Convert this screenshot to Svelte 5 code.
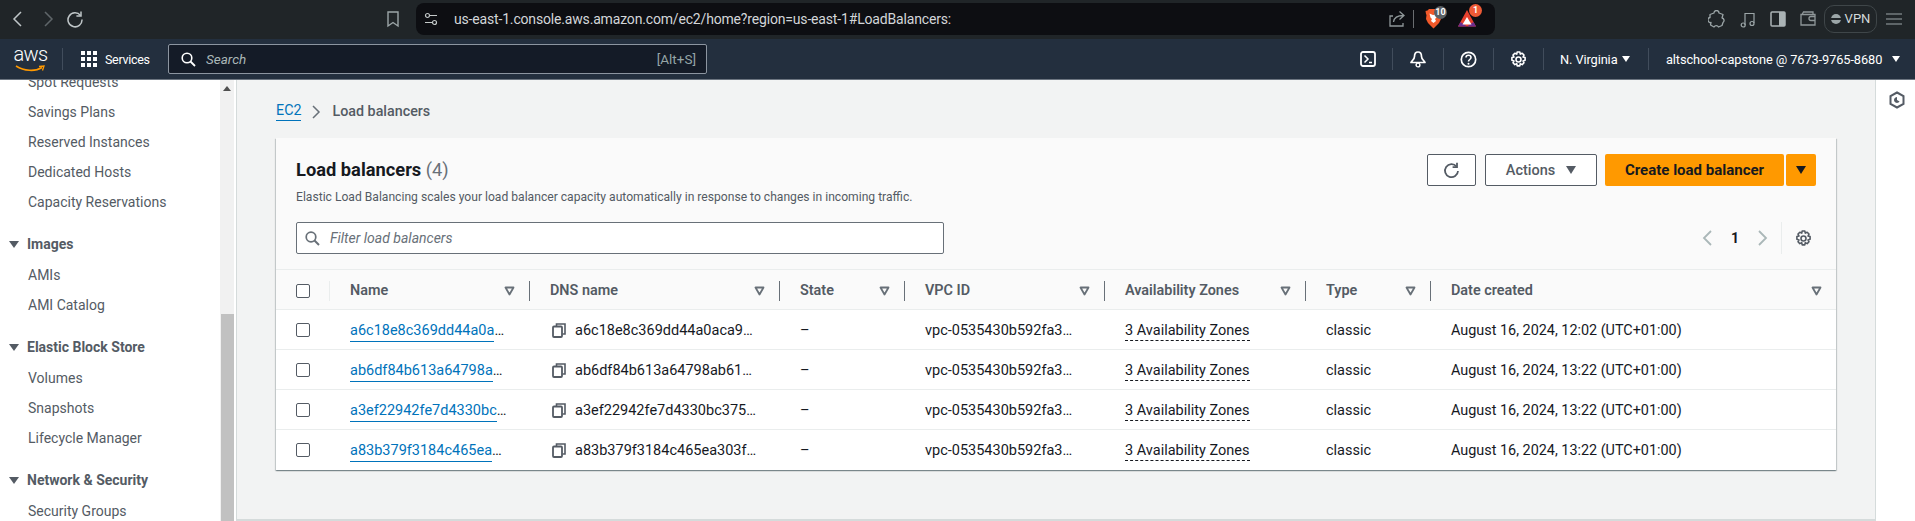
<script>
	const sideTop = ['Spot Requests', 'Savings Plans', 'Reserved Instances', 'Dedicated Hosts', 'Capacity Reservations'];
	const sideGroups = [
		{ title: 'Images', items: ['AMIs', 'AMI Catalog'] },
		{ title: 'Elastic Block Store', items: ['Volumes', 'Snapshots', 'Lifecycle Manager'] },
		{ title: 'Network & Security', items: ['Security Groups'] }
	];
	const columns = [
		{ label: 'Name', w: 200 },
		{ label: 'DNS name', w: 250 },
		{ label: 'State', w: 125 },
		{ label: 'VPC ID', w: 200 },
		{ label: 'Availability Zones', w: 201 },
		{ label: 'Type', w: 125 },
		{ label: 'Date created', w: 406 }
	];
	const rows = [
		{ name: 'a6c18e8c369dd44a0a', dns: 'a6c18e8c369dd44a0aca9', date: 'August 16, 2024, 12:02 (UTC+01:00)' },
		{ name: 'ab6df84b613a64798a', dns: 'ab6df84b613a64798ab61', date: 'August 16, 2024, 13:22 (UTC+01:00)' },
		{ name: 'a3ef22942fe7d4330bc', dns: 'a3ef22942fe7d4330bc375', date: 'August 16, 2024, 13:22 (UTC+01:00)' },
		{ name: 'a83b379f3184c465ea', dns: 'a83b379f3184c465ea303f', date: 'August 16, 2024, 13:22 (UTC+01:00)' }
	];
	const gear = 'M7.2 1h2.600l.5 2.100 1.900-.8 1.800 1.800-1 1.900 2.100.6v2.700l-2.100.6 1 1.900-1.800 1.800-1.900-1-.5 2.300H7.200l-.5-2.300-1.900 1L3 11.800l1-1.900-2.100-.6V6.600L4 6 3 4.100l1.800-1.800 1.900.8z';
</script>

<div class="page">
	<!-- browser toolbar -->
	<header class="chrome">
		<svg class="c-back" width="12" height="18" viewBox="0 0 12 18"><path d="M9 2 2 9l7 7" fill="none" stroke="#bfc6c8" stroke-width="1.500"/></svg>
		<svg class="c-fwd" width="12" height="18" viewBox="0 0 12 18"><path d="M3 2l7 7-7 7" fill="none" stroke="#5f6669" stroke-width="1.500"/></svg>
		<svg class="c-reload" width="18" height="18" viewBox="0 0 18 18"><path d="M14.500 5.500A7 7 0 1 0 16 9.500" fill="none" stroke="#bfc6c8" stroke-width="1.500"/><path d="M15 1.500v4.600h-4.600" fill="none" stroke="#bfc6c8" stroke-width="1.500"/></svg>
		<svg class="c-mark" width="14" height="18" viewBox="0 0 14 18"><path d="M2 2h10v14l-5-3.500L2 16z" fill="none" stroke="#9ca6a8" stroke-width="1.400"/></svg>
		<div class="address">
			<svg width="14" height="14" viewBox="0 0 14 14"><circle cx="3.500" cy="3.500" r="2" fill="none" stroke="#c4c9c9" stroke-width="1.200"/><path d="M6 3.500h7M1 10.500h7" stroke="#c4c9c9" stroke-width="1.200"/><circle cx="10.500" cy="10.500" r="2" fill="none" stroke="#c4c9c9" stroke-width="1.200"/></svg>
			<span class="url">us-east-1.console.aws.amazon.com/ec2/home?region=us-east-1#LoadBalancers:</span>
			<svg class="share" width="18" height="18" viewBox="0 0 18 18"><path d="M5 6H2v10h13v-3M5.500 12c.5-4 3.500-6.500 10-6.500M11.500 1.500l4.500 4-4.500 4" fill="none" stroke="#8f9799" stroke-width="1.300"/></svg>
			<i class="addr-sep"></i>
			<span class="ext">
				<svg width="17" height="21" viewBox="0 0 17 21"><path d="M4 1h9l1.500 1.500 2 .5-.5 3-.5 1 .5 4-2 4-5.500 5.500L3 15l-2-4 .5-4L1 6 .5 3l2-.5z" fill="#f1592a"/><path d="M4.500 5.500 8 7l.5 0 3.500-1.500-.5 4-1.500 1.500 1 2-2.500 2-2.500-2 1-2-1.500-1.500z" fill="#fff"/></svg>
				<b class="badge gray">10</b>
			</span>
			<span class="ext bat">
				<svg width="18" height="17" viewBox="0 0 18 17"><path d="M9 0 18 16.500H0z" fill="#e8412e"/><path d="M0 16.500 2.500 12 9 16.500l6.500-4.500L18 16.500z" fill="#6d2c8e"/><path d="M9 7l4.500 7.500h-9z" fill="#fff"/></svg>
				<b class="badge red">1</b>
			</span>
		</div>
		<svg class="c-puzzle" width="17" height="18" viewBox="0 0 17 18"><path d="M6 3a2.500 2.500 0 0 1 5 0l4 1.500-1 3.500a2.500 2.500 0 0 1 1 4.500l-1 3-3.500 1.500a2.500 2.500 0 0 0-4.500 0L2.500 15l.5-2.500a2.500 2.500 0 0 1-1-5L2 4.500z" fill="none" stroke="#9ca6a8" stroke-width="1.300" stroke-linejoin="round"/></svg>
		<svg class="c-music" width="16" height="18" viewBox="0 0 16 18"><path d="M5 15V3.500h9V13" fill="none" stroke="#9ca6a8" stroke-width="1.200"/><circle cx="3.200" cy="15" r="2" fill="none" stroke="#9ca6a8" stroke-width="1.200"/><circle cx="12" cy="13.500" r="2" fill="none" stroke="#9ca6a8" stroke-width="1.200"/></svg>
		<svg class="c-side" width="16" height="16" viewBox="0 0 16 16"><rect x="1" y="1" width="14" height="14" rx="1" fill="none" stroke="#aab3b5" stroke-width="1.500"/><rect x="9" y="1" width="6" height="14" fill="#aab3b5"/></svg>
		<svg class="c-wallet" width="16" height="15" viewBox="0 0 16 15"><path d="M2 3.500 3.500 1H13v2.500M1 3.500h14V14H1zM15 5.500h-4a2 2 0 0 0 0 4h4" fill="none" stroke="#8f9799" stroke-width="1.300"/></svg>
		<div class="vpn"><i class="vpn-dot"></i>VPN</div>
		<svg class="c-menu" width="16" height="14" viewBox="0 0 16 14"><path d="M0 2h16M0 7h16M0 12h16" stroke="#9ca6a8" stroke-width="1.200"/></svg>
	</header>

	<!-- aws console nav -->
	<nav class="topnav">
		<div class="logo">
			<span>aws</span>
			<svg width="31" height="8" viewBox="0 0 31 8"><path d="M1 1C9 6 20 7 27 2.500" fill="none" stroke="#ff9900" stroke-width="1.600"/><path d="M24 1.500 29 1l-1.500 4.500" fill="none" stroke="#ff9900" stroke-width="1.300"/></svg>
		</div>
		<i class="nav-sep first"></i>
		<svg class="grid-ico" width="16" height="16" viewBox="0 0 16 16" fill="#fff">
			{#each [0, 6, 12] as y}{#each [0, 6, 12] as x}<rect {x} {y} width="4" height="4"/>{/each}{/each}
		</svg>
		<span class="services">Services</span>
		<div class="search">
			<svg width="15" height="15" viewBox="0 0 15 15"><circle cx="6" cy="6" r="4.800" fill="none" stroke="#fff" stroke-width="1.600"/><path d="M9.500 9.500 14 14" stroke="#fff" stroke-width="1.800"/></svg>
			<em>Search</em>
			<span class="hint">[Alt+S]</span>
		</div>
		<svg class="n-shell" width="16" height="16" viewBox="0 0 16 16"><rect x="1" y="1" width="14" height="14" rx="2" fill="none" stroke="#fff" stroke-width="1.800"/><path d="M4.500 4.500 8 8l-3.500 3.500M9 11.500h3" fill="none" stroke="#fff" stroke-width="1.500"/></svg>
		<i class="nav-sep"></i>
		<svg class="n-icon" width="18" height="18" viewBox="0 0 18 18"><path d="M9 2c2.500 0 3.500 2 3.500 4.500 0 2.500 2 3.500 3.500 6H2c1.500-2.500 3.500-3.500 3.500-6C5.500 4 6.500 2 9 2z" fill="none" stroke="#fff" stroke-width="1.700" stroke-linejoin="round"/><circle cx="9" cy="15" r="1.900" fill="none" stroke="#fff" stroke-width="1.400"/></svg>
		<i class="nav-sep"></i>
		<svg class="n-icon" width="17" height="17" viewBox="0 0 17 17"><circle cx="8.500" cy="8.500" r="7.200" fill="none" stroke="#fff" stroke-width="1.700"/><path d="M6 6.500c0-3 5-3 5 0 0 2-2.500 2-2.500 4" fill="none" stroke="#fff" stroke-width="1.600"/><circle cx="8.500" cy="12.700" r="1" fill="#fff"/></svg>
		<i class="nav-sep"></i>
		<svg class="n-icon" width="17" height="17" viewBox="0 0 17 17"><circle cx="8.500" cy="8.500" r="2.500" fill="none" stroke="#fff" stroke-width="1.600"/><path d={gear} fill="none" stroke="#fff" stroke-width="1.600" stroke-linejoin="round"/></svg>
		<i class="nav-sep"></i>
		<span class="region">N. Virginia</span><i class="caret white"></i>
		<i class="nav-sep acct-sep"></i>
		<span class="account">altschool-capstone @ 7673-9765-8680</span><i class="caret white acct-caret"></i>
	</nav>

	<div class="body">
		<aside class="sidebar">
			<div class="sidelist">
				{#each sideTop as item}
					<a class="side-item" href="#x">{item}</a>
				{/each}
				{#each sideGroups as g}
					<div class="side-head"><i class="caret grey"></i>{g.title}</div>
					{#each g.items as item}
						<a class="side-item" href="#x">{item}</a>
					{/each}
				{/each}
			</div>
		</aside>
		<div class="scrollbar">
			<i class="arrow"></i>
			<i class="thumb"></i>
		</div>

		<main class="content">
			<div class="crumbs">
				<a href="#x">EC2</a>
				<svg width="10" height="16" viewBox="0 0 10 16"><path d="M2 2l6 6-6 6" fill="none" stroke="#687078" stroke-width="1.500"/></svg>
				<span>Load balancers</span>
			</div>

			<section class="card">
				<div class="card-head">
					<div class="title-row">
						<div>
							<h1>Load balancers <span>(4)</span></h1>
							<p>Elastic Load Balancing scales your load balancer capacity automatically in response to changes in incoming traffic.</p>
						</div>
						<div class="actions">
							<button class="btn icon" aria-label="Refresh">
								<svg width="17" height="17" viewBox="0 0 17 17"><path d="M13.500 4.500A6.500 6.500 0 1 0 15 9" fill="none" stroke="#545b64" stroke-width="1.800"/><path d="M14 .8v4.400H9.600" fill="none" stroke="#545b64" stroke-width="1.800"/></svg>
							</button>
							<button class="btn act">Actions<i class="caret grey big"></i></button>
							<button class="btn primary">Create load balancer</button>
							<button class="btn primary drop" aria-label="More"><i class="caret dark big"></i></button>
						</div>
					</div>
					<div class="filter-row">
						<div class="filter">
							<svg width="15" height="15" viewBox="0 0 15 15"><circle cx="6" cy="6" r="4.800" fill="none" stroke="#687078" stroke-width="1.700"/><path d="M9.500 9.500 14 14" stroke="#687078" stroke-width="1.900"/></svg>
							<em>Filter load balancers</em>
						</div>
						<div class="pager">
							<svg width="12" height="18" viewBox="0 0 12 18"><path d="M10 2 3 9l7 7" fill="none" stroke="#aab7b8" stroke-width="1.800"/></svg>
							<b>1</b>
							<svg width="12" height="18" viewBox="0 0 12 18"><path d="M2 2l7 7-7 7" fill="none" stroke="#aab7b8" stroke-width="1.800"/></svg>
							<i class="pager-sep"></i>
							<svg width="17" height="17" viewBox="0 0 17 17"><circle cx="8.500" cy="8.500" r="2.500" fill="none" stroke="#545b64" stroke-width="1.600"/><path d={gear} fill="none" stroke="#545b64" stroke-width="1.600" stroke-linejoin="round"/></svg>
						</div>
					</div>
				</div>

				<table>
					<colgroup>
						<col style="width: 53px" />
						{#each columns as c}<col style="width: {c.w}px" />{/each}
					</colgroup>
					<thead>
						<tr>
							<th class="check"><i class="box"></i></th>
							{#each columns as c, i}
								<th class:last={i === columns.length - 1}>
									<div class="th">
										<span>{c.label}</span>
										<svg width="11" height="10" viewBox="0 0 11 10"><path d="M1.500 1.500h8L5.500 8.500z" fill="none" stroke="#687078" stroke-width="1.800" stroke-linejoin="round"/></svg>
									</div>
								</th>
							{/each}
						</tr>
					</thead>
					<tbody>
						{#each rows as r}
							<tr>
								<td class="check"><i class="box"></i></td>
								<td><a class="lb" href="#x">{r.name}</a>…</td>
								<td>
									<span class="dns">
										<svg width="14" height="15" viewBox="0 0 14 15"><path d="M4.500 3V1h8.500v10h-2.500" fill="none" stroke="#545b64" stroke-width="1.600"/><rect x="1" y="3.500" width="9" height="10.500" rx="1" fill="none" stroke="#545b64" stroke-width="1.800"/></svg>
										{r.dns}…
									</span>
								</td>
								<td>–</td>
								<td>vpc-0535430b592fa3…</td>
								<td><span class="az">3 Availability Zones</span></td>
								<td>classic</td>
								<td class="date">{r.date}</td>
							</tr>
						{/each}
					</tbody>
				</table>
			</section>
		</main>

		<aside class="rail">
			<svg width="16" height="18" viewBox="0 0 16 18"><path d="M8 1.500 14.500 5v8L8 16.500 1.500 13V5z" fill="none" stroke="#545b64" stroke-width="2"/><path d="M8 6a3 3 0 1 0 2.600 4.500L8 9z" fill="#545b64"/></svg>
		</aside>
	</div>
</div>

<style>
	:global(body) {
		margin: 0;
		overflow: hidden;
		background: #fff;
	}

	* {
		box-sizing: border-box;
	}

	.page {
		width: 1915px;
		height: 521px;
		display: flex;
		flex-direction: column;
		overflow: hidden;
		font-family: Roboto, "Liberation Sans", sans-serif;
		font-size: 14px;
		color: #16191f;
	}

	i {
		display: block;
		font-style: normal;
	}

	/* browser bar */
	.chrome {
		height: 39px;
		flex: none;
		display: flex;
		align-items: center;
		background: #202528;
		padding: 0 0 2px 12px;
	}

	.chrome > *, .topnav > * {
		flex: none;
	}

	.c-fwd { margin-left: 18px; }
	.c-reload { margin-left: 12px; }
	.c-mark { margin-left: 302px; }

	.address {
		width: 1079px;
		height: 32px;
		margin-left: 16px;
		display: flex;
		align-items: center;
		padding-left: 8px;
		background: #0d0e12;
		border-radius: 8px;
	}

	.url {
		margin-left: 16px;
		width: 820px;
		color: #d3d6d9;
		font-size: 14px;
		letter-spacing: -0.17px;
		white-space: nowrap;
	}

	.share { margin-left: 114px; }

	.addr-sep {
		width: 1px;
		height: 18px;
		margin: 0 11px 0 7px;
		background: #6a6d70;
	}

	.ext {
		position: relative;
		display: flex;
	}

	.ext.bat { margin-left: 16px; }

	.badge {
		position: absolute;
		top: -2px;
		left: 9px;
		min-width: 13px;
		height: 13px;
		padding: 0 1px;
		border-radius: 7px;
		color: #fff;
		font-size: 9px;
		line-height: 13px;
		text-align: center;
	}

	.badge.gray { background: #5b6064; }
	.badge.red { background: #ee5a36; left: 11px; top: -6px; }

	.c-puzzle { margin-left: 213px; }
	.c-music { margin-left: 15px; }
	.c-side { margin-left: 14px; }
	.c-wallet { margin-left: 14px; }

	.vpn {
		width: 53px;
		height: 28px;
		margin-left: 8px;
		display: flex;
		align-items: center;
		justify-content: center;
		gap: 4px;
		border: 1px solid #3f4649;
		border-radius: 10px;
		color: #d3d9da;
		font-size: 13px;
	}

	.vpn-dot {
		width: 10px;
		height: 10px;
		border-radius: 50%;
		background: linear-gradient(#9ca6a8 4px, #202528 4px, #202528 6px, #9ca6a8 6px);
	}

	.c-menu { margin-left: 9px; }

	/* console nav */
	.topnav {
		height: 41px;
		flex: none;
		display: flex;
		align-items: center;
		background: #232f3e;
		border-bottom: 1px solid #6c7580;
		color: #fff;
	}

	.logo {
		width: 31px;
		margin-left: 15px;
		height: 28px;
		display: flex;
		flex-direction: column;
		align-items: center;
	}

	.logo span {
		font-size: 20px;
		font-weight: 300;
		line-height: 19px;
		letter-spacing: -0.6px;
	}

	.logo svg { margin-top: 1px; }

	.nav-sep {
		width: 1px;
		height: 22px;
		background: #414d5c;
		margin: 0 16px;
	}

	.nav-sep.first { margin: 0 18px 0 16px; }
	.nav-sep.acct-sep { margin: 0 17px 0 18px; }

	.services {
		width: 45px;
		margin-left: 8px;
		font-size: 12.500px;
		letter-spacing: -0.3px;
		white-space: nowrap;
	}

	.search {
		width: 539px;
		height: 30px;
		margin-left: 18px;
		display: flex;
		align-items: center;
		padding: 0 10px 0 12px;
		background: #141b27;
		border: 1px solid #8c95a0;
		border-radius: 2px;
	}

	.search em {
		margin-left: 10px;
		color: #aab7b8;
		font-size: 13.500px;
		flex: 1;
	}

	.hint {
		color: #95a5a6;
		font-size: 13.500px;
	}

	.n-shell { margin-left: 653px; }

	.region {
		width: 57px;
		font-size: 12.800px;
		letter-spacing: -0.1px;
		white-space: nowrap;
	}

	.account {
		width: 217px;
		font-size: 12.800px;
		letter-spacing: -0.1px;
		white-space: nowrap;
	}

	.caret {
		width: 0;
		height: 0;
		border-style: solid;
		border-width: 6px 4.500px 0;
		border-color: transparent;
	}

	.caret.white { border-top-color: #fff; margin-left: 5px; }
	.caret.acct-caret { margin-left: 9px; }
	.caret.grey { border-top-color: #545b64; }
	.caret.dark { border-top-color: #16191f; }
	.caret.big { border-width: 8px 5.500px 0; }

	/* main area */
	.body {
		flex: 1;
		min-height: 0;
		display: flex;
	}

	.sidebar {
		width: 220px;
		flex: none;
		overflow: hidden;
		background: #fff;
	}

	.sidelist {
		margin-top: -13px;
		color: #545b64;
	}

	.side-item {
		display: block;
		height: 30px;
		line-height: 30px;
		padding-left: 28px;
		color: #545b64;
		text-decoration: none;
	}

	.side-head {
		height: 30px;
		margin: 12px 0 1px;
		display: flex;
		align-items: center;
		gap: 8px;
		padding-left: 9px;
		font-weight: 700;
	}

	.side-head .caret { border-width: 7px 5.500px 0; }

	.scrollbar {
		width: 16px;
		flex: none;
		padding-right: 2px;
		display: flex;
		flex-direction: column;
		align-items: stretch;
		background: linear-gradient(90deg, #f1f1f1 14px, #fff 14px);
	}

	.arrow {
		width: 0;
		height: 0;
		margin: 6px 0 0 3px;
		border-style: solid;
		border-width: 0 4px 5px;
		border-color: transparent transparent #505050;
	}

	.thumb {
		flex: 1;
		margin: 223px 0 0 1px;
		background: #c1c1c1;
	}

	.content {
		flex: 1;
		min-width: 0;
		padding: 0 39px;
		background: #f2f3f3;
		border-left: 1px solid #d5dbdb;
		border-bottom: 2px solid #d5dbdb;
	}

	.crumbs {
		height: 58px;
		display: flex;
		align-items: center;
		gap: 10px;
		padding-top: 5px;
		color: #545b64;
		font-size: 14.300px;
		font-weight: 500;
	}

	.crumbs a {
		color: #0073bb;
		font-weight: 400;
		text-decoration: none;
		border-bottom: 1px solid #0073bb;
		padding-bottom: 2px;
	}

	.crumbs span { margin: -1px 0 0 1px; }

	.card {
		height: 332px;
		background: #fff;
		box-shadow: 0 1px 1px 0 rgba(0, 28, 36, 0.3), 1px 1px 1px 0 rgba(0, 28, 36, 0.15), -1px 1px 1px 0 rgba(0, 28, 36, 0.15);
	}

	.card-head {
		height: 132px;
		padding: 16px 20px 0;
		background: #fafafa;
		border-bottom: 1px solid #eaeded;
	}

	.title-row {
		display: flex;
		justify-content: space-between;
		height: 68px;
	}

	h1 {
		margin: 4px 0 0;
		font-size: 18.300px;
		line-height: 24px;
		font-weight: 700;
	}

	h1 span {
		color: #687078;
		font-weight: 400;
	}

	p {
		margin: 7px 0 0;
		font-size: 12.120px;
		line-height: 16px;
		color: #545b64;
	}

	.actions {
		display: flex;
		align-items: flex-start;
	}

	.btn {
		height: 32px;
		font: inherit;
		font-weight: 500;
		border-radius: 2px;
		display: flex;
		align-items: center;
		justify-content: center;
		padding: 0;
	}

	.btn.icon {
		width: 49px;
		margin-right: 9px;
		background: #fff;
		border: 1px solid #545b64;
	}

	.btn.act {
		width: 112px;
		gap: 11px;
		margin-right: 8px;
		background: #fff;
		border: 1px solid #545b64;
		color: #545b64;
		font-size: 14.500px;
	}

	.btn.primary {
		width: 179px;
		background: #ff9900;
		border: none;
		color: #16191f;
		font-size: 15px;
		font-weight: 700;
	}

	.btn.drop {
		width: 30px;
		margin-left: 2px;
	}

	.filter-row {
		display: flex;
		justify-content: space-between;
		align-items: center;
		height: 32px;
	}

	.filter {
		width: 648px;
		height: 32px;
		display: flex;
		align-items: center;
		gap: 10px;
		padding-left: 8px;
		background: #fff;
		border: 1px solid #687078;
		border-radius: 2px;
	}

	.filter em {
		color: #687078;
		font-size: 14px;
	}

	.pager {
		display: flex;
		align-items: center;
		margin-right: 4px;
	}

	.pager b {
		width: 44px;
		text-align: center;
		font-weight: 700;
		color: #16191f;
	}

	.pager-sep {
		width: 1px;
		height: 32px;
		margin: 0 13px 0 12px;
		background: #eaeded;
	}

	table {
		width: 1560px;
		table-layout: fixed;
		border-collapse: collapse;
	}

	th {
		height: 39px;
		padding: 3px 0 0;
		background: #fafafa;
		border-bottom: 1px solid #eaeded;
		text-align: left;
		color: #545b64;
		font-size: 14.400px;
		font-weight: 600;
	}

	.th {
		height: 20px;
		display: flex;
		align-items: center;
		justify-content: space-between;
		padding: 0 14px 0 20px;
		border-left: 1px solid #687078;
	}

	th:nth-child(2) .th { border-left-color: #eaeded; }
	th.last .th { padding-right: 14px; }

	td {
		height: 40px;
		padding: 2px 0 0 21px;
		border-bottom: 1px solid #eaeded;
		white-space: nowrap;
		color: #16191f;
		font-size: 14.500px;
	}

	td.date { font-size: 14.400px; }

	tbody tr:last-child td { border-bottom: none; }

	th.check { padding: 3px 0 0 20px; }
	td.check { padding: 1px 0 0 20px; }

	.box {
		width: 14px;
		height: 14px;
		background: #fff;
		border: 1px solid #545b64;
		border-radius: 2px;
	}

	.lb {
		color: #0073bb;
		text-decoration: none;
		border-bottom: 1px solid #0073bb;
		padding-bottom: 2px;
	}

	.dns {
		display: flex;
		align-items: center;
		gap: 9px;
		margin-left: 2px;
	}

	.az {
		border-bottom: 1px dashed #16191f;
		padding-bottom: 1px;
	}

	.rail {
		width: 40px;
		flex: none;
		background: #fff;
		padding: 11px 0 0 13px;
		border-left: 1px solid #d5dbdb;
	}
</style>
